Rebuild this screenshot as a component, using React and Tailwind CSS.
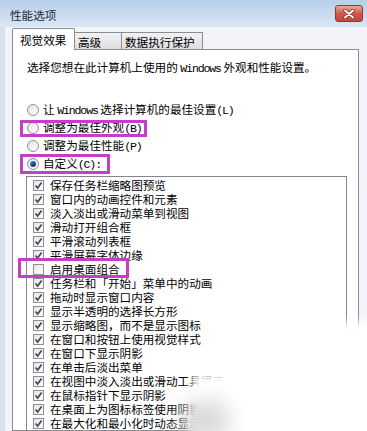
import React from 'react';

const CJK = "font-['Noto_Sans_CJK_SC','Noto_Sans',sans-serif]";

// half-width latin in the dialog's font is 0.5em wide
const M = ({ children }) => (
  <span className="font-['Liberation_Mono',monospace] tracking-[-1.17px]">{children}</span>
);

const Radio = ({ checked }) => (
  <span className="w-[12px] h-[12px] rounded-full border border-[#8e8f8f] bg-gradient-to-br from-[#e4e4e4] to-[#fdfdfd] flex items-center justify-center shrink-0">
    {checked && (
      <span className="w-[6px] h-[6px] rounded-full bg-gradient-to-br from-[#6ea6dc] via-[#1a4f8a] to-[#0a2e5c]" />
    )}
  </span>
);

const Check = ({ checked }) => (
  <span className="w-[11px] h-[11px] border border-[#8f8f8f] bg-gradient-to-br from-[#e6e6e6] to-[#ffffff] flex items-center justify-center shrink-0">
    {checked && (
      <svg width="9" height="9" viewBox="0 0 9 9">
        <path d="M1.5 4.5 L3.6 7 L7.6 1.5" fill="none" stroke="#3f4a63" strokeWidth="1.7" />
      </svg>
    )}
  </span>
);

const options = [
  { label: '保存任务栏缩略图预览', on: true },
  { label: '窗口内的动画控件和元素', on: true },
  { label: '淡入淡出或滑动菜单到视图', on: true },
  { label: '滑动打开组合框', on: true },
  { label: '平滑滚动列表框', on: true },
  { label: '平滑屏幕字体边缘', on: true },
  { label: '启用桌面组合', on: false, mark: true },
  { label: '任务栏和「开始」菜单中的动画', on: true },
  { label: '拖动时显示窗口内容', on: true },
  { label: '显示半透明的选择长方形', on: true },
  { label: '显示缩略图，而不是显示图标', on: true },
  { label: '在窗口和按钮上使用视觉样式', on: true },
  { label: '在窗口下显示阴影', on: true },
  { label: '在单击后淡出菜单', on: true },
  { label: '在视图中淡入淡出或滑动工具提示', on: true },
  { label: '在鼠标指针下显示阴影', on: true },
  { label: '在桌面上为图标标签使用阴影', on: true },
  { label: '在最大化和最小化时动态显示窗口', on: true },
];

export default function App() {
  return (
    <div className={`relative w-[367px] h-[431px] overflow-hidden bg-[#eef1f5] text-[11.6px] leading-[14px] text-black ${CJK}`}>
      {/* Title bar */}
      <div className="h-[27px] flex items-center justify-between pl-[10px] pr-[4px] bg-gradient-to-b from-[#b7cfe9] to-[#dae6f4]">
        <span className="text-[#1e2a3a] mt-[3px]">性能选项</span>
        <div className="w-[28px] h-[17px] rounded-[3px] border border-[#8b3b33] bg-gradient-to-b from-[#e9a89c] via-[#d0574a] to-[#c2483b] flex items-center justify-center">
          <svg width="12" height="10" viewBox="0 0 12 10">
            <path d="M2 1.5 L10 8.5 M10 1.5 L2 8.5" stroke="#6b2a24" strokeWidth="3.4" strokeLinecap="round" />
            <path d="M2 1.5 L10 8.5 M10 1.5 L2 8.5" stroke="#ffffff" strokeWidth="2" strokeLinecap="round" />
          </svg>
        </div>
      </div>

      {/* Body */}
      <div className="flex h-[404px]">
        <div className="w-[5px] bg-[#d5e1ef]" />
        <div className="flex-1 flex flex-col pl-[7px] pr-[8px] bg-[#f3f4f7]">
          {/* Tabs */}
          <div className="flex items-end h-[26px] mt-[-1px]">
            <div className="relative z-10 h-[22px] w-[63px] border border-b-0 border-[#898c95] bg-white pl-[7px] pt-[4px] rounded-t-[2px]">
              视觉效果
            </div>
            <div className="h-[17px] w-[47px] border border-b-0 border-l-0 border-[#898c95] bg-gradient-to-b from-[#f2f2f2] to-[#dedede] pl-[3px] pt-[2px] mb-[1px]">
              高级
            </div>
            <div className="h-[17px] w-[81px] border border-b-0 border-l-0 border-[#898c95] bg-gradient-to-b from-[#f2f2f2] to-[#dedede] pl-[3px] pt-[2px] mb-[1px]">
              数据执行保护
            </div>
          </div>

          {/* Panel */}
          <div className="flex-1 border border-[#898c95] bg-white -mt-[1px] w-[347px] flex flex-col">
            <div className="pl-[14px] mt-[10px]">
              选择您想在此计算机上使用的 <M>Windows</M> 外观和性能设置。
            </div>

            <div className="flex flex-col mt-[25px] pl-[14px]">
              <div className="h-[18px] flex items-center gap-[4px]">
                <Radio />
                <span>让 <M>Windows</M> 选择计算机的最佳设置<M>(L)</M></span>
              </div>
              <div className="relative h-[18px] flex items-center gap-[4px]">
                <Radio />
                <span>调整为最佳外观<M>(B)</M></span>
                <div className="absolute left-[-7px] top-[1px] w-[127px] h-[17px] border-[3px] border-[#c23fc6]" />
              </div>
              <div className="h-[18px] flex items-center gap-[4px]">
                <Radio />
                <span>调整为最佳性能<M>(P)</M></span>
              </div>
              <div className="relative h-[18px] flex items-center gap-[4px]">
                <Radio checked />
                <span>自定义<M>(C):</M></span>
                <div className="absolute left-[-7px] top-[-1px] w-[90px] h-[20px] border-[3px] border-[#c23fc6]" />
              </div>
            </div>

            {/* List box */}
            <div className="ml-[13px] mt-[3px] w-[321px] flex-1 border border-b-0 border-[#828790] pt-[1px] pl-[6px]">
              {options.map((o) => (
                <div key={o.label} className="relative h-[14px] flex items-center gap-[6px] whitespace-nowrap">
                  <Check checked={o.on} />
                  <span className="leading-[14px]">{o.label}</span>
                  {o.mark && (
                    <div className="absolute left-[-15px] top-[-4px] w-[111px] h-[20px] border-[3px] border-[#c23fc6]" />
                  )}
                </div>
              ))}
            </div>
          </div>
        </div>
      </div>

      {/* faded watermark over the lower right */}
      <div className="absolute left-[192px] top-[374px] w-[200px] h-[80px] bg-white blur-[4px]" />
      <div className="absolute left-[296px] top-[322px] w-[90px] h-[130px] bg-white blur-[5px]" />
      <div className="absolute left-[180px] top-[400px] w-[50px] h-[40px] rounded-full bg-[#dadada] blur-[10px]" />
    </div>
  );
}
